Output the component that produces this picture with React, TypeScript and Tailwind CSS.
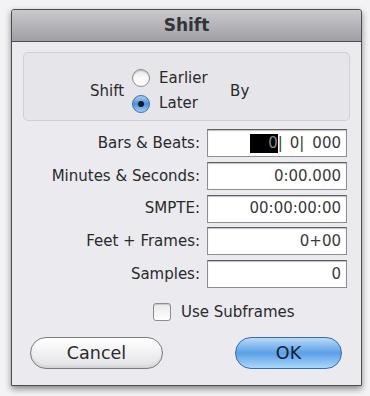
import React from 'react';

const font = { fontFamily: '"DejaVu Sans", "Liberation Sans", sans-serif' };

const Field: React.FC<{ label: string; children: React.ReactNode }> = ({ label, children }) => (
  <div className="flex items-center justify-end gap-[7px] pr-[14px]">
    <span className="text-[15px] text-[#2a2a2a]">{label}</span>
    <div className="w-[140px] h-[28px] bg-white border border-[#8e8e92] border-t-[#5f5f63] shadow-[inset_0_1px_1px_rgba(0,0,0,0.25)] flex items-center justify-end pr-[5px] text-[15px] text-[#3a3a3a]">
      {children}
    </div>
  </div>
);

const Radio: React.FC<{ checked?: boolean }> = ({ checked }) =>
  checked ? (
    <span className="w-[18px] h-[18px] rounded-full border border-[#3f6fa8] bg-gradient-to-b from-[#a9cff3] via-[#4f8fd8] to-[#9fd0fa] flex items-center justify-center">
      <span className="w-[6px] h-[6px] rounded-full bg-[#101a2a]" />
    </span>
  ) : (
    <span className="w-[18px] h-[18px] rounded-full border border-[#8d8d92] bg-gradient-to-b from-[#e6e6ea] via-[#fafafa] to-[#ffffff] shadow-[inset_0_1px_1px_rgba(0,0,0,0.2)]" />
  );

export default function App() {
  return (
    <div className="w-[370px] h-[396px] bg-[#f3f3f5] overflow-hidden" style={font}>
      <div className="ml-[11px] mt-[9px] w-[351px] h-[377px] border border-[#4b4b50] bg-[#ebeaef] flex flex-col shadow-[0_3px_6px_rgba(0,0,0,0.45)] rounded-t-[3px]">
        <div className="h-[32px] flex items-center justify-center border-b border-[#4b4b50] bg-gradient-to-b from-[#cac9ce] to-[#a09fa5] rounded-t-[3px]">
          <span className="text-[17px] font-bold text-[#333338]">Shift</span>
        </div>

        <div className="mx-[11px] mt-[10px] h-[69px] rounded-[5px] border border-[#d0cfd5] bg-[#e6e5ea] flex items-start pl-[66px] pt-[15px]">
          <div className="flex items-center">
            <span className="text-[15px] text-[#2a2a2a]">Shift</span>
            <div className="ml-[8px] w-[78px] flex flex-col gap-[5.5px]">
              <div className="h-[20px] flex items-center gap-[9px]">
                <Radio />
                <span className="text-[15px] text-[#2a2a2a]">Earlier</span>
              </div>
              <div className="h-[20px] flex items-center gap-[9px]">
                <Radio checked />
                <span className="text-[15px] text-[#2a2a2a]">Later</span>
              </div>
            </div>
            <span className="ml-[20px] text-[15px] text-[#2a2a2a]">By</span>
          </div>
        </div>

        <div className="mt-[8px] flex flex-col gap-[4.75px]">
          <Field label="Bars & Beats:">
            <span className="bg-black text-[#8a8a8a] w-[28px] h-[19px] flex items-center justify-end overflow-hidden">0</span>
            <span>|</span>
            <span className="ml-[7px]">0|</span>
            <span className="ml-[8px]">000</span>
          </Field>
          <Field label="Minutes & Seconds:">0:00.000</Field>
          <Field label="SMPTE:">00:00:00:00</Field>
          <Field label="Feet + Frames:">0+00</Field>
          <Field label="Samples:">0</Field>
        </div>

        <div className="mt-[16px] pl-[141px] flex items-center gap-[10px] h-[16px]">
          <span className="w-[18px] h-[18px] rounded-[3px] border border-[#8d8d92] bg-gradient-to-b from-[#e9e9ec] to-white shadow-[inset_0_1px_1px_rgba(0,0,0,0.15)]" />
          <span className="text-[15px] text-[#2a2a2a]">Use Subframes</span>
        </div>

        <div className="mt-[17px] flex items-center justify-between pl-[18px] pr-[19px]">
          <button className="w-[133px] h-[32px] rounded-full border border-[#7a7a80] bg-gradient-to-b from-white via-[#f1f1f3] to-[#e2e2e6] shadow-[inset_0_-2px_3px_rgba(0,0,0,0.08)] text-[17.5px] text-[#2a2a2a]">
            Cancel
          </button>
          <button className="w-[107px] h-[32px] rounded-full border border-[#3a69ac] bg-gradient-to-b from-[#b7daf7] via-[#5b9fe6] to-[#a8d8fb] text-[17.5px] text-[#13213a]">
            OK
          </button>
        </div>
      </div>
    </div>
  );
}
